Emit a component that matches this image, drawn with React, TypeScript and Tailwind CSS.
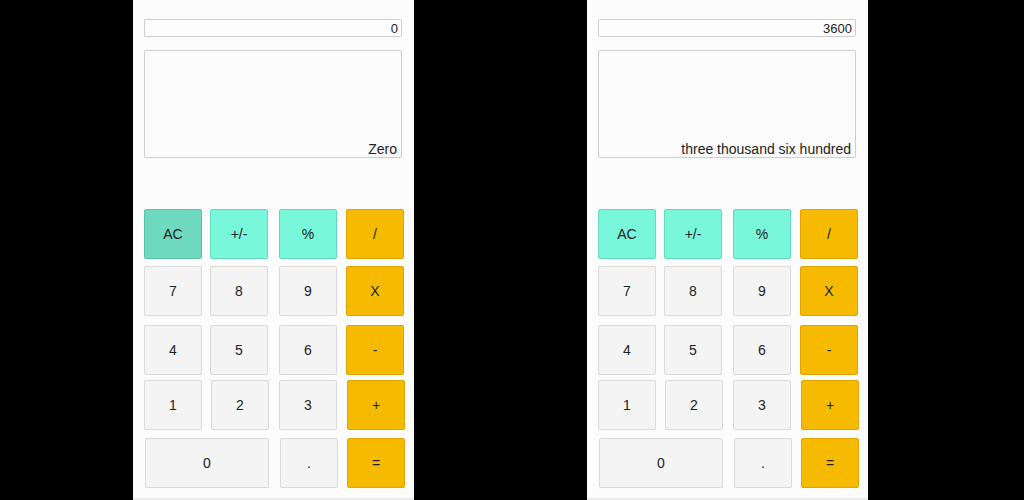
type Kind = 'num' | 'fn' | 'fnOn' | 'op'

interface Key {
  label: string
  kind: Kind
  cls: string
}

const KIND_CLS: Record<Kind, string> = {
  num: 'bg-[#f4f4f4] border-[#d9d9d9]',
  fn: 'bg-[#79f7db] border-[#62d9bd]',
  fnOn: 'bg-[#6fd9c0] border-[#5cc2a9]',
  op: 'bg-[#f6bb00] border-[#dea500]',
}

// rows are slightly uneven in the screenshot, so each row carries its own top offset
function rowsFor(acOn: boolean): { mt: string; keys: Key[] }[] {
  return [
    {
      mt: 'mt-[51px]',
      keys: [
        { label: 'AC', kind: acOn ? 'fnOn' : 'fn', cls: 'ml-[11px] w-[58px]' },
        { label: '+/-', kind: 'fn', cls: 'ml-[8px] w-[58px]' },
        { label: '%', kind: 'fn', cls: 'ml-[11px] w-[58px]' },
        { label: '/', kind: 'op', cls: 'ml-[9px] w-[58px]' },
      ],
    },
    {
      mt: 'mt-[7px]',
      keys: [
        { label: '7', kind: 'num', cls: 'ml-[11px] w-[58px]' },
        { label: '8', kind: 'num', cls: 'ml-[8px] w-[58px]' },
        { label: '9', kind: 'num', cls: 'ml-[11px] w-[58px]' },
        { label: 'X', kind: 'op', cls: 'ml-[9px] w-[58px]' },
      ],
    },
    {
      mt: 'mt-[9px]',
      keys: [
        { label: '4', kind: 'num', cls: 'ml-[11px] w-[58px]' },
        { label: '5', kind: 'num', cls: 'ml-[8px] w-[58px]' },
        { label: '6', kind: 'num', cls: 'ml-[11px] w-[58px]' },
        { label: '-', kind: 'op', cls: 'ml-[9px] w-[58px]' },
      ],
    },
    {
      mt: 'mt-[5px]',
      keys: [
        { label: '1', kind: 'num', cls: 'ml-[11px] w-[58px]' },
        { label: '2', kind: 'num', cls: 'ml-[9px] w-[58px]' },
        { label: '3', kind: 'num', cls: 'ml-[10px] w-[58px]' },
        { label: '+', kind: 'op', cls: 'ml-[10px] w-[58px]' },
      ],
    },
    {
      mt: 'mt-[8px]',
      keys: [
        { label: '0', kind: 'num', cls: 'ml-[12px] w-[124px]' },
        { label: '.', kind: 'num', cls: 'ml-[11px] w-[58px]' },
        { label: '=', kind: 'op', cls: 'ml-[9px] w-[58px]' },
      ],
    },
  ]
}

function Calculator({ value, words, acOn }: { value: string; words: string; acOn: boolean }) {
  return (
    <div className="w-[281px] h-[500px] bg-[#fcfcfc] flex flex-col border-b-2 border-[#ececec] font-['Liberation_Sans',Arial,sans-serif] text-[#222]">
      <div className="mt-[19px] ml-[11px] w-[258px] h-[18px] border border-[#cdcdcd] rounded-[2px] bg-[#fdfdfd] flex items-center justify-end pr-[3px] pt-[1px] text-[13px] leading-none">
        {value}
      </div>
      <div className="mt-[13px] ml-[11px] w-[258px] h-[108px] border border-[#cdcdcd] rounded-[2px] bg-[#fbfbfb] flex items-end justify-end pr-[4px] text-[14px] leading-[16px]">
        {words}
      </div>
      {rowsFor(acOn).map((row, i) => (
        <div key={i} className={`flex ${row.mt}`}>
          {row.keys.map(k => (
            <div
              key={k.label}
              className={`h-[50px] flex items-center justify-center border rounded-[2px] text-[14px] ${KIND_CLS[k.kind]} ${k.cls}`}
            >
              {k.label}
            </div>
          ))}
        </div>
      ))}
    </div>
  )
}

export default function App() {
  return (
    <div className="w-[1024px] h-[500px] bg-black flex overflow-hidden">
      <div className="ml-[133px]">
        <Calculator value="0" words="Zero" acOn />
      </div>
      <div className="ml-[173px]">
        <Calculator value="3600" words="three thousand six hundred" acOn={false} />
      </div>
    </div>
  )
}
